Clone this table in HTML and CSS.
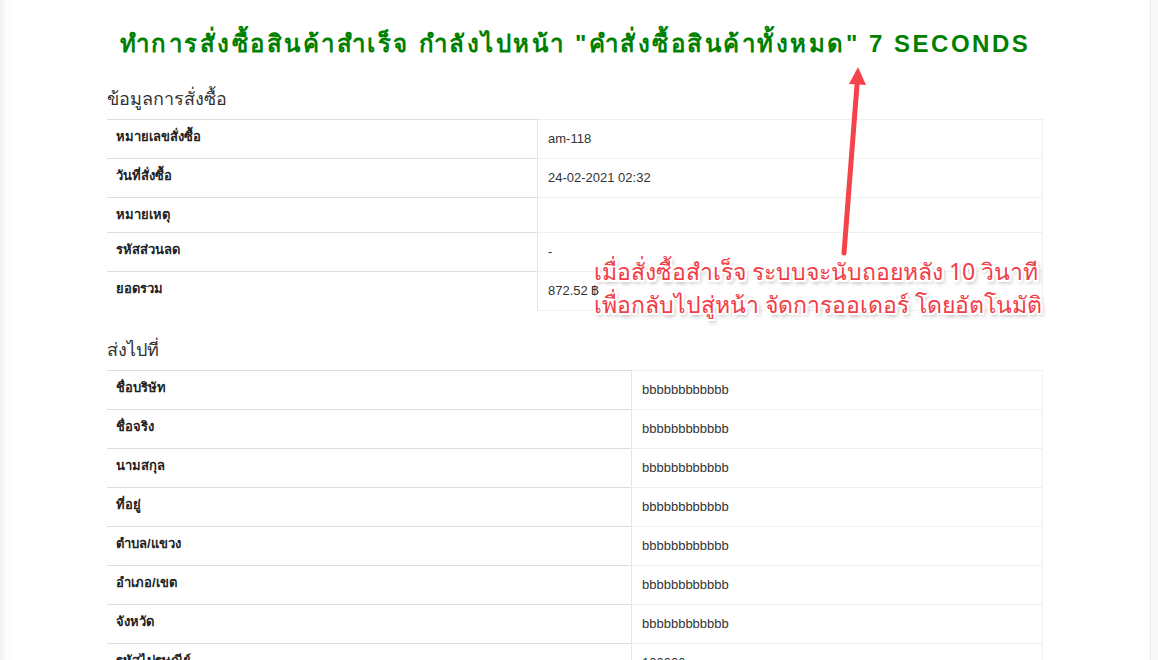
FILE: index.html
```html
<!DOCTYPE html>
<html lang="th">
<head>
<meta charset="utf-8">
<title>สั่งซื้อสำเร็จ</title>
<link rel="stylesheet" href="styles.css">
</head>
<body>
<div class="page">
  <main class="main">
    <div class="container">
      <h3 class="title">ทำการสั่งซื้อสินค้าสำเร็จ กำลังไปหน้า "คำสั่งซื้อสินค้าทั้งหมด" 7 SECONDS</h3>

      <h4 class="section">ข้อมูลการสั่งซื้อ</h4>
      <table class="info info-order">
        <tr><th>หมายเลขสั่งซื้อ</th><td>am-118</td></tr>
        <tr><th>วันที่สั่งซื้อ</th><td>24-02-2021 02:32</td></tr>
        <tr><th>หมายเหตุ</th><td class="empty"></td></tr>
        <tr><th>รหัสส่วนลด</th><td>-</td></tr>
        <tr><th>ยอดรวม</th><td>872.52 ฿</td></tr>
      </table>

      <h4 class="section section-ship">ส่งไปที่</h4>
      <table class="info info-ship">
        <tr><th>ชื่อบริษัท</th><td>bbbbbbbbbbbb</td></tr>
        <tr><th>ชื่อจริง</th><td>bbbbbbbbbbbb</td></tr>
        <tr><th>นามสกุล</th><td>bbbbbbbbbbbb</td></tr>
        <tr><th>ที่อยู่</th><td>bbbbbbbbbbbb</td></tr>
        <tr><th>ตำบล/แขวง</th><td>bbbbbbbbbbbb</td></tr>
        <tr><th>อำเภอ/เขต</th><td>bbbbbbbbbbbb</td></tr>
        <tr><th>จังหวัด</th><td>bbbbbbbbbbbb</td></tr>
        <tr><th>รหัสไปรษณีย์</th><td>100000</td></tr>
      </table>
    </div>

    <svg class="arrow" width="40" height="200" viewBox="0 0 40 200" aria-hidden="true">
      <line x1="13" y1="188" x2="26" y2="20" stroke="#f4434a" stroke-width="5" stroke-linecap="round"/>
      <polygon points="27,2 35,20 18,19" fill="#f4434a"/>
    </svg>
    <div class="note">เมื่อสั่งซื้อสำเร็จ ระบบจะนับถอยหลัง 10 วินาที<br>เพื่อกลับไปสู่หน้า จัดการออเดอร์ โดยอัตโนมัติ</div>
  </main>
  <div class="scrollbar"></div>
</div>
</body>
</html>
```

FILE: styles.css
```css
html, body {
  margin: 0;
  padding: 0;
  background: #fff;
}

body {
  font-family: "Liberation Sans", Tahoma, "Noto Sans", sans-serif;
  color: #333;
  font-size: 13px;
  overflow: hidden;
  height: 660px;
}

.page {
  display: flex;
  height: 660px;
}

.main {
  flex: 1;
  position: relative;
  background: linear-gradient(to right, #f1f1f1 0, #fbfbfb 6px, #fff 12px);
  overflow: hidden;
}

.scrollbar {
  width: 7px;
  border-left: 1px solid #ececec;
  background: #f8f8f8;
}

.container {
  width: 936px;
  margin: 0 auto;
}

.title {
  margin: 30px 0 0;
  text-align: center;
  color: #008000;
  font-size: 24px;
  font-weight: bold;
  letter-spacing: 2.5px;
  line-height: 28px;
}

.section {
  margin: 30px 0 9px;
  font-size: 18px;
  font-weight: normal;
  line-height: 22px;
  color: #333;
}

.section-ship {
  margin-top: 28px;
}

.info {
  width: 100%;
  border-collapse: collapse;
  border-spacing: 0;
}

.info th {
  text-align: left;
  font-weight: bold;
  font-size: 13px;
  line-height: 18px;
  padding: 8px 9px;
  border-top: 1px solid #dddddd;
  vertical-align: top;
  color: #222;
}

.info td {
  font-size: 13px;
  line-height: 18px;
  padding: 10px 10px;
  border: 1px solid #f0f0f0;
  border-left-color: #e6e6e6;
  vertical-align: top;
}

.info-order th { width: 412px; }
.info-ship th { width: 506px; }

.arrow {
  position: absolute;
  left: 831px;
  top: 65px;
}

.note {
  position: absolute;
  left: 594px;
  top: 255px;
  color: #f23d47;
  font-family: Tahoma, "Noto Sans", "Liberation Sans", sans-serif;
  font-size: 23px;
  line-height: 33px;
  white-space: nowrap;
  text-shadow:
    -2px 0 0 #fff, 2px 0 0 #fff, 0 -2px 0 #fff, 0 2px 0 #fff,
    -1px -1px 0 #fff, 1px -1px 0 #fff, -1px 1px 0 #fff, 1px 1px 0 #fff,
    2px 2px 0 #fff, -2px 2px 0 #fff, 2px -2px 0 #fff, -2px -2px 0 #fff,
    2px 3px 4px rgba(0, 0, 0, 0.45);
}
```
